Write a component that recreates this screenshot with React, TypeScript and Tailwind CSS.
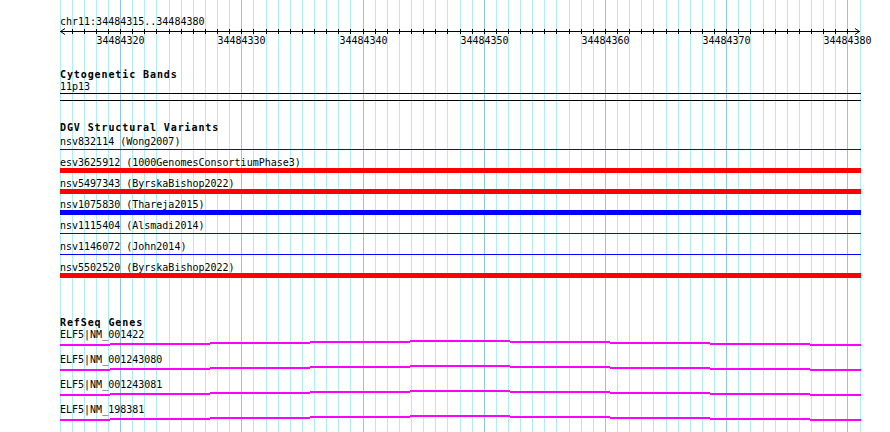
import React from "react";

const START = 34484315;
const BASES = 66;
const LEFT = 60;
const SPAN = 800;
const STEP = SPAN / BASES;

// pixel column for base k, snapped for crisp 1px strokes
const colX = (k: number) => Math.floor(LEFT + STEP * k) + 0.5;

const VARIANTS = [
  { id: "nsv832114", src: "Wong2007", kind: "line" },
  { id: "esv3625912", src: "1000GenomesConsortiumPhase3", kind: "red" },
  { id: "nsv5497343", src: "ByrskaBishop2022", kind: "red" },
  { id: "nsv1075830", src: "Thareja2015", kind: "blue" },
  { id: "nsv1115404", src: "Alsmadi2014", kind: "line" },
  { id: "nsv1146072", src: "John2014", kind: "line" },
  { id: "nsv5502520", src: "ByrskaBishop2022", kind: "red" },
] as const;

const GENES = [
  "ELF5|NM_001422",
  "ELF5|NM_001243080",
  "ELF5|NM_001243081",
  "ELF5|NM_198381",
];

// stepped transcript line: [from, to, yOffset] in absolute page x
const GENE_STEPS: [number, number, number][] = [
  [60, 110, 4],
  [110, 210, 3],
  [210, 310, 2],
  [310, 410, 1],
  [410, 510, 0],
  [510, 610, 1],
  [610, 710, 2],
  [710, 810, 3],
  [810, 861, 4],
];

function Grid() {
  return (
    <svg
      className="pointer-events-none absolute inset-0"
      width={890}
      height={432}
    >
      {Array.from({ length: BASES + 1 }, (_, k) => {
        const major = (START + k) % 10 === 0;
        return (
          <line
            key={k}
            x1={colX(k)}
            x2={colX(k)}
            y1={0}
            y2={432}
            stroke={major ? "#8cc8e8" : "#aeeef2"}
            strokeWidth={1}
          />
        );
      })}
    </svg>
  );
}

function Ruler() {
  const y = 4.5;
  return (
    <svg width={812} height={24} className="block overflow-visible">
      <line x1={0} x2={800} y1={y} y2={y} stroke="#000" />
      <polyline points={`5,1.5 0.5,${y} 5,7.5`} fill="none" stroke="#000" />
      <polyline points={`795,1.5 799.5,${y} 795,7.5`} fill="none" stroke="#000" />
      {Array.from({ length: BASES - 1 }, (_, i) => {
        const k = i + 1;
        const x = colX(k) - LEFT;
        const major = (START + k) % 10 === 0;
        return (
          <g key={k}>
            <line x1={x} x2={x} y1={2} y2={7} stroke="#000" />
            {major && (
              <text
                x={x}
                y={17}
                textAnchor="middle"
                fontSize={10}
                fontFamily="'DejaVu Sans Mono', monospace"
                fill="#000"
              >
                {START + k}
              </text>
            )}
          </g>
        );
      })}
    </svg>
  );
}

function Header({ children }: { children: React.ReactNode }) {
  return <div className="h-[12px] font-bold tracking-[0.9px]">{children}</div>;
}

function VariantRow({ id, src, kind }: (typeof VARIANTS)[number]) {
  return (
    <div className="h-[21px]">
      <div className="h-[12px] whitespace-pre">{`${id} (${src})`}</div>
      {kind === "line" && <div className="mt-[2px] h-[1px] w-[801px] bg-[#0000ff]" />}
      {kind === "red" && <div className="h-[5px] w-[801px] bg-[#ff0000]" />}
      {kind === "blue" && <div className="h-[5px] w-[801px] bg-[#0000ff]" />}
    </div>
  );
}

function GeneRow({ name }: { name: string }) {
  return (
    <div className="h-[25px]">
      <div className="h-[12px]">{name}</div>
      <svg width={801} height={13} className="block">
        {GENE_STEPS.map(([a, b, dy]) => (
          <rect key={a} x={a - LEFT} y={dy} width={b - a} height={2} fill="#ff00ff" />
        ))}
      </svg>
    </div>
  );
}

export default function App() {
  return (
    <div className="relative h-[432px] w-[890px] overflow-hidden bg-white font-['DejaVu_Sans_Mono',monospace] text-[10px] leading-[14px] text-black">
      <Grid />

      <div className="relative pl-[60px] pt-[15px]">
        {/* location + ruler */}
        <div className="h-[12px]">chr11:34484315..34484380</div>
        <Ruler />

        {/* cytogenetic bands */}
        <div className="mt-[17px]">
          <Header>Cytogenetic Bands</Header>
          <div className="h-[12px]">11p13</div>
          <div className="mt-[1px] h-[1px] w-[801px] bg-black" />
          <div className="mt-[6px] h-[1px] w-[801px] bg-black" />
        </div>

        {/* DGV */}
        <div className="mt-[20px]">
          <Header>DGV Structural Variants</Header>
          <div className="mt-[2px]">
            {VARIANTS.map((v) => (
              <VariantRow key={v.id} {...v} />
            ))}
          </div>
        </div>

        {/* RefSeq */}
        <div className="mt-[34px]">
          <Header>RefSeq Genes</Header>
          {GENES.map((g) => (
            <GeneRow key={g} name={g} />
          ))}
        </div>
      </div>
    </div>
  );
}
